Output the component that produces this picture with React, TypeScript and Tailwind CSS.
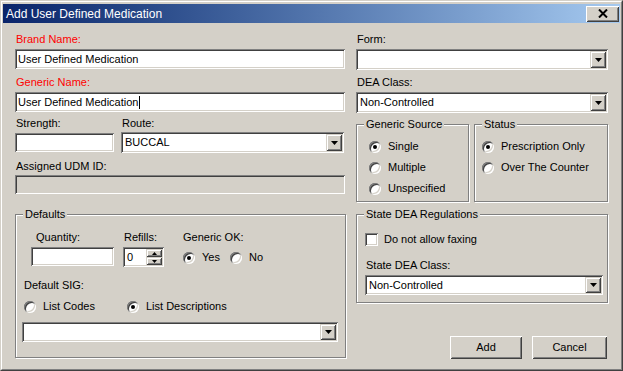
import React from "react";

// classic 3D edges
const sunken =
  "shadow-[inset_1px_1px_0_#808080,inset_-1px_-1px_0_#ffffff,inset_2px_2px_0_#404040,inset_-2px_-2px_0_#d4d0c8]";
const raised =
  "shadow-[inset_1px_1px_0_#d4d0c8,inset_-1px_-1px_0_#404040,inset_2px_2px_0_#ffffff,inset_-2px_-2px_0_#808080]";
const button =
  "shadow-[inset_1px_1px_0_#ffffff,inset_-1px_-1px_0_#404040,inset_2px_2px_0_#d4d0c8,inset_-2px_-2px_0_#808080]";

function Label({ children, red, className = "" }: { children: React.ReactNode; red?: boolean; className?: string }) {
  return (
    <div className={`h-[13px] leading-[13px] whitespace-nowrap ${red ? "text-[#ff0000]" : "text-black"} ${className}`}>
      {children}
    </div>
  );
}

function TextBox({ value, className = "", disabled, caret }: { value?: string; className?: string; disabled?: boolean; caret?: boolean }) {
  return (
    <div className={`flex items-center px-[3px] ${disabled ? "bg-[#d4d0c8]" : "bg-white"} ${sunken} ${className}`}>
      <span className="leading-[13px] whitespace-nowrap">{value}</span>
      {caret && <span className="ml-px h-[13px] w-px bg-black" />}
    </div>
  );
}

function Arrow({ size = "big" }: { size?: "big" | "small" }) {
  if (size === "small") {
    return (
      <svg width="5" height="3" viewBox="0 0 5 3">
        <polygon points="0,0 5,0 2.5,3" fill="#000" />
      </svg>
    );
  }
  return (
    <svg width="7" height="4" viewBox="0 0 7 4">
      <polygon points="0,0 7,0 3.5,4" fill="#000" />
    </svg>
  );
}

function Combo({ value, className = "" }: { value?: string; className?: string }) {
  return (
    <div className={`flex items-stretch bg-white p-[2px] ${sunken} ${className}`}>
      <div className="flex flex-1 items-center px-[2px] leading-[13px] whitespace-nowrap">{value}</div>
      <div className={`flex w-[16px] items-center justify-center bg-[#d4d0c8] ${raised}`}>
        <Arrow />
      </div>
    </div>
  );
}

function Radio({ checked, label, className = "" }: { checked?: boolean; label: string; className?: string }) {
  return (
    <div className={`flex items-center ${className}`}>
      <div className={`flex h-[12px] w-[12px] items-center justify-center rounded-full bg-white ${sunken}`}>
        {checked && <div className="h-[4px] w-[4px] rounded-full bg-black" />}
      </div>
      <span className="ml-[7px] leading-[13px] whitespace-nowrap">{label}</span>
    </div>
  );
}

function GroupBox({ title, className = "", children }: { title: string; className?: string; children: React.ReactNode }) {
  return (
    <div className={`relative border border-[#808080] shadow-[1px_1px_0_#ffffff,inset_1px_1px_0_#ffffff] ${className}`}>
      <span className="absolute left-[7px] top-[-7px] bg-[#d4d0c8] px-[2px] leading-[13px] whitespace-nowrap">{title}</span>
      {children}
    </div>
  );
}

function PushButton({ children, className = "" }: { children: React.ReactNode; className?: string }) {
  return (
    <div className={`flex h-[23px] items-center justify-center bg-[#d4d0c8] ${button} ${className}`}>{children}</div>
  );
}

export default function App() {
  return (
    <div
      className="h-[371px] w-[623px] border border-t-[#d4d0c8] border-l-[#d4d0c8] border-r-[#404040] border-b-[#404040] bg-[#d4d0c8] text-[11px] text-black"
      style={{ fontFamily: '"Liberation Sans", Arial, sans-serif' }}
    >
      <div className="flex h-full flex-col border border-t-white border-l-white border-r-[#808080] border-b-[#808080] px-[1px] pt-[2px]">
        {/* title bar */}
        <div className="flex h-[19px] items-center justify-between bg-gradient-to-r from-[#0a246a] to-[#a6caf0] pl-[3px] pr-[1px]">
          <span className="text-[12px] leading-[14px] text-white">Add User Defined Medication</span>
          <div className={`flex h-[16px] w-[33px] items-center justify-center bg-[#d4d0c8] ${button}`}>
            <svg width="10" height="9" viewBox="0 0 10 9">
              <path d="M1 0.5 L9 8.5 M9 0.5 L1 8.5" stroke="#000" strokeWidth="2" />
            </svg>
          </div>
        </div>

        {/* body */}
        <div className="flex flex-1 pl-[12px] pt-[10px]">
          {/* left column */}
          <div className="flex w-[331px] flex-col">
            <Label red className="pl-[1px]">Brand Name:</Label>
            <TextBox value="User Defined Medication" className="mt-[3px] h-[20px] w-[330px]" />
            <Label red className="mt-[7px] pl-[1px]">Generic Name:</Label>
            <TextBox value="User Defined Medication" caret className="mt-[3px] h-[20px] w-[330px]" />
            <div className="mt-[5px] flex">
              <div className="flex w-[106px] flex-col">
                <Label className="pl-[1px]">Strength:</Label>
                <TextBox className="mt-[3px] h-[19px] w-[99px]" />
              </div>
              <div className="flex flex-col">
                <Label className="pl-[1px]">Route:</Label>
                <Combo value="BUCCAL" className="mt-[2px] h-[21px] w-[223px]" />
              </div>
            </div>
            <Label className="mt-[7px] pl-[1px]">Assigned UDM ID:</Label>
            <TextBox disabled className="mt-[2px] h-[19px] w-[330px]" />

            <GroupBox title="Defaults" className="mt-[20px] h-[144px] w-[331px]">
              <div className="flex pl-[15px] pt-[16px]">
                <div className="flex w-[92px] flex-col">
                  <Label className="pl-[5px]">Quantity:</Label>
                  <TextBox className="mt-[3px] h-[19px] w-[83px]" />
                </div>
                <div className="flex w-[59px] flex-col">
                  <Label className="pl-[1px]">Refills:</Label>
                  <div className={`mt-[3px] flex h-[20px] w-[41px] bg-white p-[2px] ${sunken}`}>
                    <div className="flex flex-1 items-center pl-[2px] leading-[13px]">0</div>
                    <div className="flex w-[16px] flex-col">
                      <div className={`flex flex-1 items-center justify-center bg-[#d4d0c8] ${raised}`}>
                        <svg width="5" height="3" viewBox="0 0 5 3">
                          <polygon points="2.5,0 5,3 0,3" fill="#000" />
                        </svg>
                      </div>
                      <div className={`flex flex-1 items-center justify-center bg-[#d4d0c8] ${raised}`}>
                        <Arrow size="small" />
                      </div>
                    </div>
                  </div>
                </div>
                <div className="flex flex-col">
                  <Label className="pl-[1px]">Generic OK:</Label>
                  <div className="mt-[7px] flex">
                    <Radio checked label="Yes" className="w-[48px] pl-[1px]" />
                    <Radio label="No" />
                  </div>
                </div>
              </div>
              <Label className="mt-[12px] pl-[8px]">Default SIG:</Label>
              <div className="mt-[8px] flex pl-[8px]">
                <Radio label="List Codes" className="w-[103px]" />
                <Radio checked label="List Descriptions" />
              </div>
              <Combo className="ml-[6px] mt-[9px] h-[20px] w-[316px]" />
            </GroupBox>
          </div>

          {/* right column */}
          <div className="ml-[10px] flex w-[252px] flex-col">
            <Label className="pl-[1px]">Form:</Label>
            <Combo className="mt-[3px] h-[21px] w-[252px]" />
            <Label className="mt-[6px] pl-[1px]">DEA Class:</Label>
            <Combo value="Non-Controlled" className="mt-[3px] h-[21px] w-[252px]" />

            <div className="mt-[11px] flex">
              <GroupBox title="Generic Source" className="h-[78px] w-[113px]">
                <div className="flex flex-col gap-[8px] pl-[12px] pt-[15px]">
                  <Radio checked label="Single" />
                  <Radio label="Multiple" />
                  <Radio label="Unspecified" />
                </div>
              </GroupBox>
              <GroupBox title="Status" className="ml-[5px] h-[78px] w-[134px]">
                <div className="flex flex-col gap-[8px] pl-[7px] pt-[15px]">
                  <Radio checked label="Prescription Only" />
                  <Radio label="Over The Counter" />
                </div>
              </GroupBox>
            </div>

            <GroupBox title="State DEA Regulations" className="mt-[12px] h-[89px] w-[252px]">
              <div className="flex items-center pl-[8px] pt-[18px]">
                <div className={`h-[13px] w-[13px] bg-white ${sunken}`} />
                <span className="ml-[6px] leading-[13px]">Do not allow faxing</span>
              </div>
              <Label className="mt-[13px] pl-[9px]">State DEA Class:</Label>
              <Combo value="Non-Controlled" className="ml-[8px] mt-[3px] h-[20px] w-[238px]" />
            </GroupBox>

            <div className="mt-[33px] flex justify-end gap-[10px] pr-[1px]">
              <PushButton className="w-[72px]">Add</PushButton>
              <PushButton className="w-[75px]">Cancel</PushButton>
            </div>
          </div>
        </div>
      </div>
    </div>
  );
}
